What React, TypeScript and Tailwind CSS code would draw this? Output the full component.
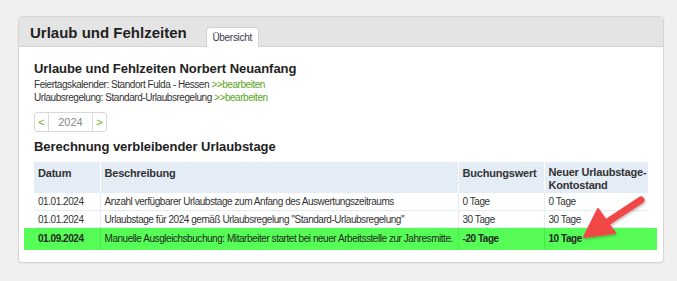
const rows = [
  { date: '01.01.2024', text: 'Anzahl verfügbarer Urlaubstage zum Anfang des Auswertungszeitraums', value: '0 Tage', total: '0 Tage' },
  { date: '01.01.2024', text: 'Urlaubstage für 2024 gemäß Urlaubsregelung "Standard-Urlaubsregelung"', value: '30 Tage', total: '30 Tage' },
]

const App = () => {
  return (
    <div className="w-[677px] h-[281px] bg-[#efefef] pt-[16px] pl-[18px] font-['Liberation_Sans',Arial,sans-serif] text-[#333]">
      <div className="relative w-[646px] h-[247px] bg-white border border-[#d6d6d6] rounded-[4px] shadow-[0_1px_2px_rgba(0,0,0,0.06)]">
        {/* Header bar with tab */}
        <div className="flex items-end h-[30px] bg-[#e4e4e4] border-b border-[#d2d2d2] rounded-t-[4px] pl-[11px]">
          <h1 className="self-center text-[15px] font-bold text-[#222] leading-none mt-[2px]">Urlaub und Fehlzeiten</h1>
          <div className="ml-[19px] mb-[-1px] w-[53px] h-[20px] bg-white border border-b-0 border-[#d2d2d2] rounded-t-[4px] flex items-center justify-center text-[10px] tracking-[-0.3px] text-[#3a3a4a]">
            Übersicht
          </div>
        </div>

        <div className="pl-[15px] pr-[15px]">
          <h2 className="mt-[13px] text-[13px] leading-[18px] font-bold tracking-[-0.05px] text-[#222]">Urlaube und Fehlzeiten Norbert Neuanfang</h2>
          <p className="text-[10px] leading-[13px] tracking-[-0.45px] text-[#333]">
            Feiertagskalender: Standort Fulda - Hessen <span className="text-[#5ca41c]">&gt;&gt;bearbeiten</span>
          </p>
          <p className="text-[10px] leading-[13px] tracking-[-0.45px] text-[#333]">
            Urlaubsregelung: Standard-Urlaubsregelung <span className="text-[#5ca41c]">&gt;&gt;bearbeiten</span>
          </p>

          <div className="mt-[8px] flex w-[73px] h-[20px] border border-[#d8d8d8] rounded-[3px] text-[11px]">
            <span className="w-[14px] flex items-center justify-center text-[#6aae2a] border-r border-[#d8d8d8]">&lt;</span>
            <span className="flex-1 flex items-center justify-center text-[#888]">2024</span>
            <span className="w-[14px] flex items-center justify-center text-[#6aae2a] border-l border-[#d8d8d8]">&gt;</span>
          </div>

          <h2 className="mt-[6px] text-[13px] leading-[18px] font-bold tracking-[-0.05px] text-[#222]">Berechnung verbleibender Urlaubstage</h2>

          <table className="mt-[6px] w-[614px] table-fixed border-collapse text-[10px] tracking-[-0.45px]">
            <colgroup>
              <col className="w-[66px]" />
              <col className="w-[358px]" />
              <col className="w-[86px]" />
              <col className="w-[104px]" />
            </colgroup>
            <thead>
              <tr className="h-[30px] bg-[#e4ecf6] text-[11px] tracking-[-0.2px] font-bold text-[#333] leading-[13px]">
                <th className="pt-[5px] px-[4px] text-left align-top border-r border-white">Datum</th>
                <th className="pt-[5px] px-[4px] text-left align-top border-r border-white">Beschreibung</th>
                <th className="pt-[5px] px-[4px] text-left align-top border-r border-white">Buchungswert</th>
                <th className="pt-[4px] pl-[4px] pr-0 text-left align-top whitespace-nowrap">
                  Neuer Urlaubstage-
                  <br />
                  Kontostand
                </th>
              </tr>
            </thead>
            <tbody>
              {rows.map((r, i) => (
                <tr key={i} className={i === 0 ? 'h-[18px]' : 'h-[17px]'}>
                  <td className="px-[4px] border border-[#e4ecf6] border-l-0">{r.date}</td>
                  <td className="px-[4px] border border-[#e4ecf6] whitespace-nowrap">{r.text}</td>
                  <td className="px-[4px] border border-[#e4ecf6]">{r.value}</td>
                  <td className="px-[4px] border border-[#e4ecf6] border-r-0">{r.total}</td>
                </tr>
              ))}
              <tr className="h-[22px] bg-[#57fd57] text-[#1f2a1f]">
                <td className="px-[4px] font-bold border-r border-[#4fe64f] shadow-[-10px_0_0_0_#57fd57]">01.09.2024</td>
                <td className="px-[4px] border-r border-[#4fe64f] whitespace-nowrap">Manuelle Ausgleichsbuchung: Mitarbeiter startet bei neuer Arbeitsstelle zur Jahresmitte.</td>
                <td className="px-[4px] font-bold border-r border-[#4fe64f]">-20 Tage</td>
                <td className="px-[4px] font-bold shadow-[9px_0_0_0_#57fd57]">10 Tage</td>
              </tr>
            </tbody>
          </table>
        </div>

        {/* Annotation arrow */}
        <svg className="absolute left-[540px] top-[170px] overflow-visible" width="100" height="70" viewBox="0 0 100 70">
          <defs>
            <filter id="sh" x="-20%" y="-20%" width="140%" height="140%">
              <feDropShadow dx="1" dy="1.5" stdDeviation="1" floodColor="#000" floodOpacity="0.25" />
            </filter>
          </defs>
          <g filter="url(#sh)" fill="#f24646" stroke="#f24646" strokeLinejoin="round" strokeLinecap="round">
            <line x1="82" y1="13" x2="44" y2="38" strokeWidth="7" />
            <polygon points="25,50 39,22 56,46" strokeWidth="2" />
          </g>
        </svg>
      </div>
    </div>
  )
}

export default App
